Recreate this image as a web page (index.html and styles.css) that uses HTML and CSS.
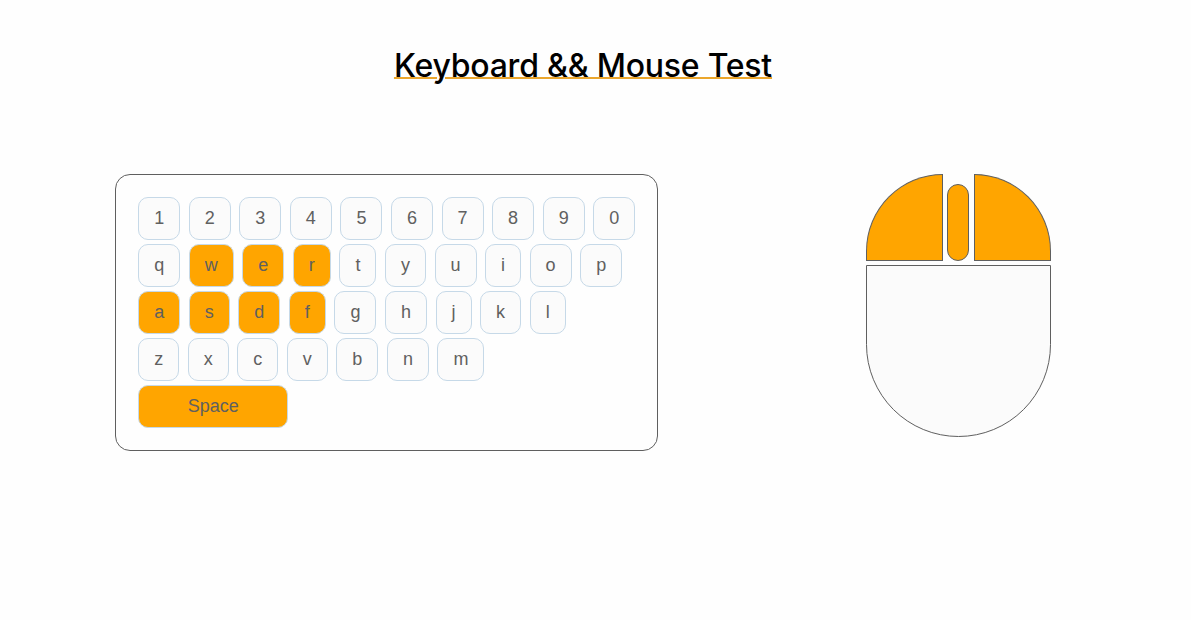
FILE: index.html
```html
<!DOCTYPE html>
<html lang="en">
<head>
<meta charset="utf-8">
<title>Keyboard &amp;&amp; Mouse Test</title>
<link rel="stylesheet" href="styles.css">
</head>
<body>
<h1 class="title">Keyboard &amp;&amp; Mouse Test</h1>
<main class="devices">
  <section class="keyboard">
    <div class="row"><span class="key">1</span><span class="key">2</span><span class="key">3</span><span class="key">4</span><span class="key">5</span><span class="key">6</span><span class="key">7</span><span class="key">8</span><span class="key">9</span><span class="key">0</span></div>
    <div class="row"><span class="key">q</span><span class="key pressed">w</span><span class="key pressed">e</span><span class="key pressed">r</span><span class="key">t</span><span class="key">y</span><span class="key">u</span><span class="key">i</span><span class="key">o</span><span class="key">p</span></div>
    <div class="row"><span class="key pressed">a</span><span class="key pressed">s</span><span class="key pressed">d</span><span class="key pressed">f</span><span class="key">g</span><span class="key">h</span><span class="key">j</span><span class="key">k</span><span class="key">l</span></div>
    <div class="row"><span class="key">z</span><span class="key">x</span><span class="key">c</span><span class="key">v</span><span class="key">b</span><span class="key">n</span><span class="key">m</span></div>
    <div class="row"><span class="key space pressed">Space</span></div>
  </section>
  <section class="mouse">
    <div class="buttons">
      <div class="button left"></div>
      <div class="wheel"></div>
      <div class="button right"></div>
    </div>
    <div class="palm"></div>
  </section>
</main>
</body>
</html>
```
FILE: styles.css
```css
* { box-sizing: border-box; }
body {
  margin: 0;
  background: #fefefe;
  font-family: Inter, sans-serif;
}
.title {
  width: 1166px;
  margin: 0;
  padding-top: 46px;
  font-size: 32px;
  font-weight: 500;
  line-height: 39px;
  letter-spacing: -0.23px;
  text-align: center;
  color: #000;
  text-decoration: underline 2px #eba62c;
  text-underline-offset: 0;
}
.devices {
  display: flex;
  align-items: flex-start;
  gap: 208px;
  padding: 89px 0 0 115px;
}
.keyboard {
  display: flex;
  flex-direction: column;
  gap: 4px;
  width: 543px;
  height: 277px;
  padding: 22px 22px 22px 22.18px;
  border: 1px solid #5f5f5f;
  border-radius: 15px;
}
.row { display: flex; gap: 8.56px; }
.key {
  height: 43px;
  padding: 0 15px;
  border: 1px solid #c6d9e8;
  border-radius: 10px;
  background: #fbfbfb;
  color: #606060;
  font: 18px/41px "Liberation Sans", Arial, sans-serif;
  text-align: center;
}
.pressed { background: orange; }
.space { width: 150px; }
.mouse { width: 185px; }
.buttons {
  display: flex;
  align-items: flex-end;
  margin-bottom: 4px;
}
.button {
  width: 77px;
  height: 87px;
  border: 1px solid #5f5f5f;
  background: orange;
}
.left { border-top-left-radius: 77px; }
.right { border-top-right-radius: 77px; }
.wheel {
  width: 22px;
  height: 77px;
  margin: 0 5px 0 4px;
  border: 1px solid #5f5f5f;
  border-radius: 11px;
  background: orange;
}
.palm {
  height: 172px;
  border: 1px solid #5f5f5f;
  border-radius: 0 0 93px 93px;
  background: #fbfbfb;
}
```
